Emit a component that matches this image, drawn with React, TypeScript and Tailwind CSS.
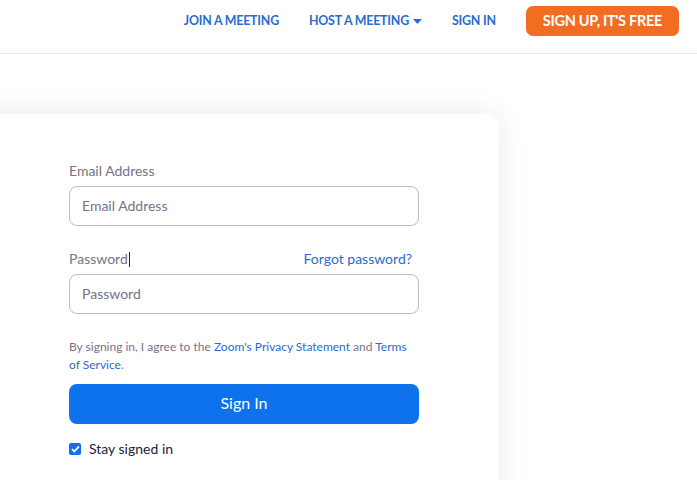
import React from "react";

export default function App() {
  return (
    <div className="w-[697px] h-[480px] overflow-hidden bg-white" style={{ fontFamily: "Lato, 'Open Sans', sans-serif" }}>
      <header className="h-[54px] border-b border-[#e8e8ea] flex items-start justify-end pt-[6px] pr-[18px]">
        <nav className="flex items-center h-[30px] gap-[30px] text-[12.4px] font-bold text-[#2a6bd0] tracking-[-0.2px]">
          <a className="h-[30px] flex items-center">JOIN A MEETING</a>
          <a className="h-[30px] flex items-center gap-[4px]">
            HOST A MEETING
            <svg width="9" height="5" viewBox="0 0 9 5"><path d="M0 0h9L4.5 5z" fill="#2a6bd0" /></svg>
          </a>
          <a className="h-[30px] flex items-center">SIGN IN</a>
          <button className="h-[30px] px-[17px] rounded-[7px] bg-[#f26d21] text-white text-[14.5px] font-bold tracking-[-0.3px] flex items-center">
            SIGN UP, IT'S FREE
          </button>
        </nav>
      </header>
      <main className="pt-[60px]">
        <div className="-ml-[40px] w-[539px] h-[420px] bg-white rounded-[12px] shadow-[0_0_30px_rgba(0,0,0,0.09)] pl-[109px] pt-[48px]">
          <div className="w-[350px]">
            <label className="block text-[14px] text-[#747487] leading-[18px]">Email Address</label>
            <div className="mt-[6px] h-[40px] border border-[#babacc] rounded-[8px] flex items-center px-[12px] pb-[2px] text-[14px] text-[#747487]">
              Email Address
            </div>
            <div className="mt-[24px] h-[18px] flex items-center justify-between pr-[7px]">
              <label className="text-[14px] text-[#747487] leading-[18px] flex items-center">
                Password<span className="inline-block w-[1px] h-[15px] bg-[#232333] ml-[1px]" />
              </label>
              <a className="text-[14px] text-[#2a6bd0] leading-[18px]">Forgot password?</a>
            </div>
            <div className="mt-[6px] h-[40px] border border-[#babacc] rounded-[8px] flex items-center px-[12px] pb-[2px] text-[14px] text-[#747487]">
              Password
            </div>
            <p className="mt-[24px] text-[12px] leading-[18px] text-[#747487] pr-[8px]">
              By signing in, I agree to the <span className="text-[#2a6bd0]">Zoom's Privacy Statement</span> and{" "}
              <span className="text-[#2a6bd0]">Terms of Service</span>.
            </p>
            <button className="mt-[10px] w-[350px] h-[40px] rounded-[8px] bg-[#0e72ed] text-white text-[16px] pb-[2px] flex items-center justify-center">
              Sign In
            </button>
            <div className="mt-[14px] flex items-center gap-[8px]">
              <span className="w-[12px] h-[12px] rounded-[2px] bg-[#0e72ed] flex items-center justify-center">
                <svg width="9" height="8" viewBox="0 0 9 8"><path d="M1 4.2l2.3 2.3L8 1.3" stroke="white" strokeWidth="1.8" fill="none" /></svg>
              </span>
              <span className="text-[14px] text-[#232333]">Stay signed in</span>
            </div>
          </div>
        </div>
      </main>
    </div>
  );
}
